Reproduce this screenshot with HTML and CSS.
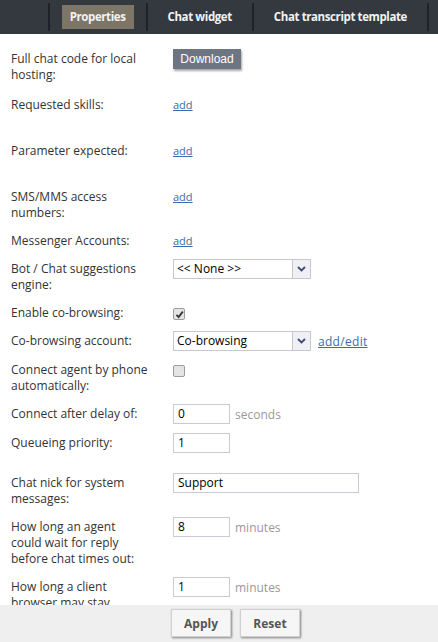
FILE: index.html
```html
<!DOCTYPE html>
<html>
<head>
<meta charset="utf-8">
<link rel="stylesheet" href="styles.css">
</head>
<body>
<div class="page">
  <header class="tabs">
    <span class="sep"></span>
    <span class="tab active">Properties</span>
    <span class="sep"></span>
    <span class="tab">Chat widget</span>
    <span class="sep"></span>
    <span class="tab">Chat transcript template</span>
    <span class="sep"></span>
  </header>
  <main class="content">
    <div class="row row-first">
      <div class="label">Full chat code for local hosting:</div>
      <div class="ctrl"><button class="btn-download">Download</button></div>
    </div>
    <div class="row row-gap-lg">
      <div class="label">Requested skills:</div>
      <div class="ctrl"><a class="link">add</a></div>
    </div>
    <div class="row row-gap-lg">
      <div class="label">Parameter expected:</div>
      <div class="ctrl"><a class="link">add</a></div>
    </div>
    <div class="row">
      <div class="label">SMS/MMS access numbers:</div>
      <div class="ctrl"><a class="link">add</a></div>
    </div>
    <div class="row">
      <div class="label">Messenger Accounts:</div>
      <div class="ctrl"><a class="link">add</a></div>
    </div>
    <div class="row">
      <div class="label">Bot / Chat suggestions engine:</div>
      <div class="ctrl">
        <div class="select"><span class="select-text">&lt;&lt; None &gt;&gt;</span><span class="select-arrow"><svg width="9" height="6" viewBox="0 0 9 6"><path d="M1 1 L4.5 4.5 L8 1" fill="none" stroke="#3d4c70" stroke-width="1.8"/></svg></span></div>
      </div>
    </div>
    <div class="row">
      <div class="label">Enable co-browsing:</div>
      <div class="ctrl"><span class="check checked"><svg width="9" height="9" viewBox="0 0 9 9"><path d="M1.5 4.8 L3.6 7 L7.8 1.6" fill="none" stroke="#333" stroke-width="1.8"/></svg></span></div>
    </div>
    <div class="row">
      <div class="label">Co-browsing account:</div>
      <div class="ctrl">
        <div class="select"><span class="select-text">Co-browsing</span><span class="select-arrow"><svg width="9" height="6" viewBox="0 0 9 6"><path d="M1 1 L4.5 4.5 L8 1" fill="none" stroke="#3d4c70" stroke-width="1.8"/></svg></span></div>
        <a class="link link-edit">add/edit</a>
      </div>
    </div>
    <div class="row">
      <div class="label">Connect agent by phone automatically:</div>
      <div class="ctrl"><span class="check"></span></div>
    </div>
    <div class="row">
      <div class="label">Connect after delay of:</div>
      <div class="ctrl"><span class="input">0</span><span class="unit">seconds</span></div>
    </div>
    <div class="row row-gap-md">
      <div class="label">Queueing priority:</div>
      <div class="ctrl"><span class="input">1</span></div>
    </div>
    <div class="row">
      <div class="label">Chat nick for system messages:</div>
      <div class="ctrl"><span class="input input-wide">Support</span></div>
    </div>
    <div class="row">
      <div class="label">How long an agent could wait for reply before chat times out:</div>
      <div class="ctrl"><span class="input">8</span><span class="unit">minutes</span></div>
    </div>
    <div class="row">
      <div class="label">How long a client browser may stay inactive before chat times out:</div>
      <div class="ctrl"><span class="input">1</span><span class="unit">minutes</span></div>
    </div>
  </main>
  <footer class="footer">
    <button class="btn">Apply</button>
    <button class="btn">Reset</button>
  </footer>
</div>
</body>
</html>
```
FILE: styles.css
```css
* { box-sizing: border-box; }
html, body { margin: 0; padding: 0; }
body {
  font-family: "Open Sans", "Liberation Sans", sans-serif;
  background: #fff;
  color: #333;
}
.page {
  width: 438px;
  height: 642px;
  display: flex;
  flex-direction: column;
  overflow: hidden;
}
.tabs {
  height: 34px;
  flex: none;
  background: #343940;
  display: flex;
  justify-content: flex-end;
  align-items: center;
  padding-right: 9px;
}
.sep {
  width: 2px;
  height: 28px;
  background: #1f2226;
}
.tab {
  margin: 0 12px;
  padding: 0 8px;
  height: 24px;
  line-height: 24px;
  color: #f2f2f2;
  font-weight: 700;
  font-size: 11.5px;
  letter-spacing: -0.4px;
}
.tab.active { background: #7d7565; }
.content {
  flex: 1;
  overflow: hidden;
  padding: 15px 0 0 11px;
}
.row {
  display: flex;
  align-items: flex-start;
  margin-bottom: 9px;
}
.row-first { margin-bottom: 11px; }
.row-gap-lg { margin-bottom: 27px; }
.row-gap-md { margin-bottom: 20px; }
.label {
  width: 162px;
  flex: none;
  padding: 2px 24px 1px 0;
  font-size: 12px;
  line-height: 16px;
  color: #333;
}
.ctrl {
  display: flex;
  align-items: center;
  min-height: 19px;
}
.btn-download {
  height: 20px;
  width: 68px;
  padding: 0;
  border: none;
  background: #6d7482;
  color: #fff;
  font-family: "Liberation Sans", sans-serif;
  font-size: 12px;
  box-shadow: 1px 2px 2px rgba(0,0,0,0.35);
}
.link {
  color: #3a6bab;
  text-decoration: underline;
  font-size: 11px;
}
.link-edit {
  font-size: 12px;
  margin-left: 7px;
  letter-spacing: 0.3px;
}
.select {
  width: 138px;
  height: 20px;
  border: 1px solid #c6c6d4;
  display: flex;
  background: #fff;
}
.select-text {
  flex: 1;
  font-size: 12px;
  line-height: 18px;
  padding-left: 3px;
  color: #000;
}
.select-arrow {
  width: 18px;
  border-left: 1px solid #c6c6d4;
  background: #f0f0f4;
  display: flex;
  align-items: center;
  justify-content: center;
}
.check {
  width: 12px;
  height: 12px;
  margin-top: 3px;
  border: 1px solid #9d9d9d;
  border-radius: 2px;
  background: #e4e4e4;
  display: flex;
  align-items: center;
  justify-content: center;
}
.input {
  display: block;
  width: 57px;
  height: 20px;
  border: 1px solid #c9c9d8;
  font-size: 12px;
  line-height: 18px;
  padding-left: 4px;
  color: #000;
}
.input-wide { width: 186px; }
.unit {
  margin-left: 5px;
  color: #999;
  font-size: 12px;
}
.footer {
  height: 37px;
  flex: none;
  background: #efefef;
  display: flex;
  align-items: flex-start;
  padding: 4px 0 0 171px;
  gap: 9px;
}
.btn {
  height: 28px;
  width: 60px;
  border: 1px solid #d0d0d0;
  background: #f6f6f6;
  color: #555;
  font-family: "Open Sans", sans-serif;
  font-weight: 700;
  font-size: 12px;
  box-shadow: 1px 1px 2px rgba(0,0,0,0.45);
  padding: 0;
}
```
